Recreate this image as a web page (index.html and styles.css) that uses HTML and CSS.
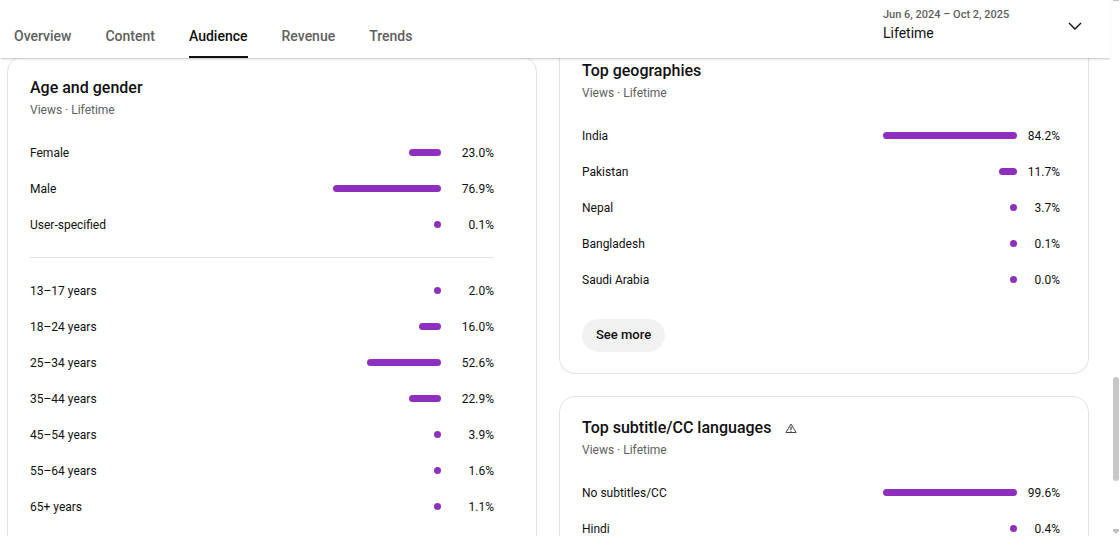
FILE: index.html
```html
<!DOCTYPE html>
<html lang="en">
<head>
    <meta charset="utf-8">
    <title>Channel analytics</title>
    <link rel="stylesheet" href="styles.css">
</head>
<body>
    <div class="app">
        <header class="topbar">
            <nav class="tabs">
                <a href="#overview">Overview</a>
                <a href="#content">Content</a>
                <a href="#audience" class="active">Audience</a>
                <a href="#revenue">Revenue</a>
                <a href="#trends">Trends</a>
            </nav>
            <button type="button" class="period">
                <span class="period-text">
                    <span class="period-dates">Jun 6, 2024 – Oct 2, 2025</span>
                    <span class="period-name">Lifetime</span>
                </span>
                <svg width="14" height="8" viewBox="0 0 14 8" fill="none" stroke="#0f0f0f" stroke-width="1.4"><path d="M1 1l6 6 6-6"/></svg>
            </button>
        </header>

        <main class="columns">
            <!-- left column -->
            <section class="card card-wide">
                <h2>Age and gender</h2>
                <p class="sub">Views · Lifetime</p>
                <table>
                    <tr><th scope="row">Female</th><td class="track"><div class="bar" style="width: 23%"></div></td><td class="value">23.0%</td></tr>
                    <tr><th scope="row">Male</th><td class="track"><div class="bar" style="width: 76.9%"></div></td><td class="value">76.9%</td></tr>
                    <tr><th scope="row">User-specified</th><td class="track"><div class="bar" style="width: 0.1%"></div></td><td class="value">0.1%</td></tr>
                </table>
                <hr>
                <table>
                    <tr><th scope="row">13–17 years</th><td class="track"><div class="bar" style="width: 2%"></div></td><td class="value">2.0%</td></tr>
                    <tr><th scope="row">18–24 years</th><td class="track"><div class="bar" style="width: 16%"></div></td><td class="value">16.0%</td></tr>
                    <tr><th scope="row">25–34 years</th><td class="track"><div class="bar" style="width: 52.6%"></div></td><td class="value">52.6%</td></tr>
                    <tr><th scope="row">35–44 years</th><td class="track"><div class="bar" style="width: 22.9%"></div></td><td class="value">22.9%</td></tr>
                    <tr><th scope="row">45–54 years</th><td class="track"><div class="bar" style="width: 3.9%"></div></td><td class="value">3.9%</td></tr>
                    <tr><th scope="row">55–64 years</th><td class="track"><div class="bar" style="width: 1.6%"></div></td><td class="value">1.6%</td></tr>
                    <tr><th scope="row">65+ years</th><td class="track"><div class="bar" style="width: 1.1%"></div></td><td class="value">1.1%</td></tr>
                </table>
            </section>

            <!-- right column -->
            <div class="stack">
                <section class="card card-cut">
                    <h2>Top geographies</h2>
                    <p class="sub">Views · Lifetime</p>
                    <table>
                        <tr><th scope="row">India</th><td class="track"><div class="bar" style="width: 100%"></div></td><td class="value">84.2%</td></tr>
                        <tr><th scope="row">Pakistan</th><td class="track"><div class="bar" style="width: 13.4%"></div></td><td class="value">11.7%</td></tr>
                        <tr><th scope="row">Nepal</th><td class="track"><div class="bar" style="width: 4.4%"></div></td><td class="value">3.7%</td></tr>
                        <tr><th scope="row">Bangladesh</th><td class="track"><div class="bar" style="width: 0.1%"></div></td><td class="value">0.1%</td></tr>
                        <tr><th scope="row">Saudi Arabia</th><td class="track"><div class="bar" style="width: 0%"></div></td><td class="value">0.0%</td></tr>
                    </table>
                    <button type="button" class="more">See more</button>
                </section>

                <section class="card">
                    <h2>Top subtitle/CC languages
                        <svg width="12" height="11" viewBox="0 0 12 11" fill="none" stroke="#444" stroke-width="1"><path d="M6 1L.9 9.500h10.200z"/><path d="M6 3.500v3.500M6 7.700v1" stroke-width="1.200"/></svg>
                    </h2>
                    <p class="sub">Views · Lifetime</p>
                    <table>
                        <tr><th scope="row">No subtitles/CC</th><td class="track"><div class="bar" style="width: 100%"></div></td><td class="value">99.6%</td></tr>
                        <tr><th scope="row">Hindi</th><td class="track"><div class="bar" style="width: 0.4%"></div></td><td class="value">0.4%</td></tr>
                    </table>
                </section>
            </div>
        </main>
    </div>

    <div class="scrollbar">
        <div class="scroll-before"></div>
        <div class="scroll-thumb"></div>
        <div class="scroll-after">
            <svg width="6" height="5" viewBox="0 0 6 5" fill="#c1c1c1"><path d="M0 0h6v2L3 5 0 2z"/></svg>
        </div>
    </div>
</body>
</html>
```
FILE: styles.css
```css
* {
    box-sizing: border-box;
}

body {
    margin: 0;
    height: 100vh;
    display: flex;
    overflow: hidden;
    background: #fff;
    color: #0f0f0f;
    font-family: Roboto, Arial, sans-serif;
    font-size: 12px;
}

.app {
    flex: 1;
    display: flex;
    flex-direction: column;
    min-width: 0;
}

/* top bar */
.topbar {
    position: relative;
    z-index: 1;
    flex: none;
    display: flex;
    justify-content: space-between;
    height: 58px;
    padding: 0 29px 0 14px;
    background: #fff;
    box-shadow: 0 2px 2px -1px rgba(0, 0, 0, 0.25);
}

.tabs {
    display: flex;
    gap: 34px;
}

.tabs a {
    padding-top: 26px;
    border-bottom: 2px solid transparent;
    color: #606060;
    font-size: 14px;
    font-weight: 500;
    line-height: 20px;
    text-decoration: none;
}

.tabs a.active {
    color: #0f0f0f;
    border-bottom-color: #0f0f0f;
}

.period {
    display: flex;
    align-items: center;
    justify-content: space-between;
    width: 199px;
    height: 52px;
    padding: 0;
    border: 0;
    background: none;
    color: #0f0f0f;
    font-family: inherit;
    text-align: left;
}

.period-text {
    display: flex;
    flex-direction: column;
    padding-bottom: 3px;
}

.period-dates {
    color: #606060;
    font-size: 11px;
    font-weight: 500;
    line-height: 16px;
}

.period-name {
    font-size: 14px;
    line-height: 20px;
}

/* cards */
.columns {
    flex: 1;
    display: grid;
    grid-template-columns: 1fr 1fr;
    gap: 22px;
    min-height: 0;
    margin-top: -2px;
    padding: 0 22px 0 7px;
    overflow: hidden;
}

.stack {
    display: flex;
    flex-direction: column;
    gap: 22px;
}

.card {
    padding: 19px 28px 21px 22px;
    border: 1px solid #e2e2e2;
    border-radius: 16px;
}

.card-wide {
    padding-right: 42px;
}

.card-cut {
    padding-top: 3px;
    border-top: 0;
    border-radius: 0 0 16px 16px;
}

.stack .card {
    flex: none;
}

h2 {
    display: flex;
    align-items: center;
    gap: 14px;
    margin: 0;
    font-size: 16px;
    font-weight: 500;
    line-height: 24px;
}

.sub {
    margin: 2px 0 16px;
    color: #606060;
    line-height: 16px;
}

table {
    width: 100%;
    border-collapse: collapse;
}

tr {
    height: 36px;
}

th {
    padding: 2px 0 0;
    font-weight: 400;
    text-align: left;
}

td {
    padding: 0;
}

.track {
    width: 134px;
}

.value {
    width: 43px;
    padding-top: 2px;
    text-align: right;
}

.card-wide .track {
    width: 140px;
}

.card-wide .value {
    width: 53px;
}

.bar {
    min-width: 7px;
    height: 7px;
    margin-left: auto;
    border-radius: 4px;
    background: #8e2fbe;
}

hr {
    height: 1px;
    margin: 15px 0 14px;
    border: 0;
    background: #e2e2e2;
}

.more {
    height: 33px;
    margin-top: 22px;
    padding: 0 14px 2px;
    border: 0;
    border-radius: 17px;
    background: #f2f2f2;
    color: #0f0f0f;
    font-family: inherit;
    font-size: 13px;
    font-weight: 500;
}

/* page scrollbar */
.scrollbar {
    display: flex;
    flex-direction: column;
    width: 9px;
    padding: 0 1px 0 2px;
}

.scroll-before {
    flex: 378;
    border-top: 1px solid #c1c1c1;
}

.scroll-thumb {
    flex: 105;
    border-radius: 3px;
    background: #c8c8c8;
}

.scroll-after {
    flex: 53;
    display: flex;
    align-items: flex-end;
    padding-bottom: 2px;
}
```
